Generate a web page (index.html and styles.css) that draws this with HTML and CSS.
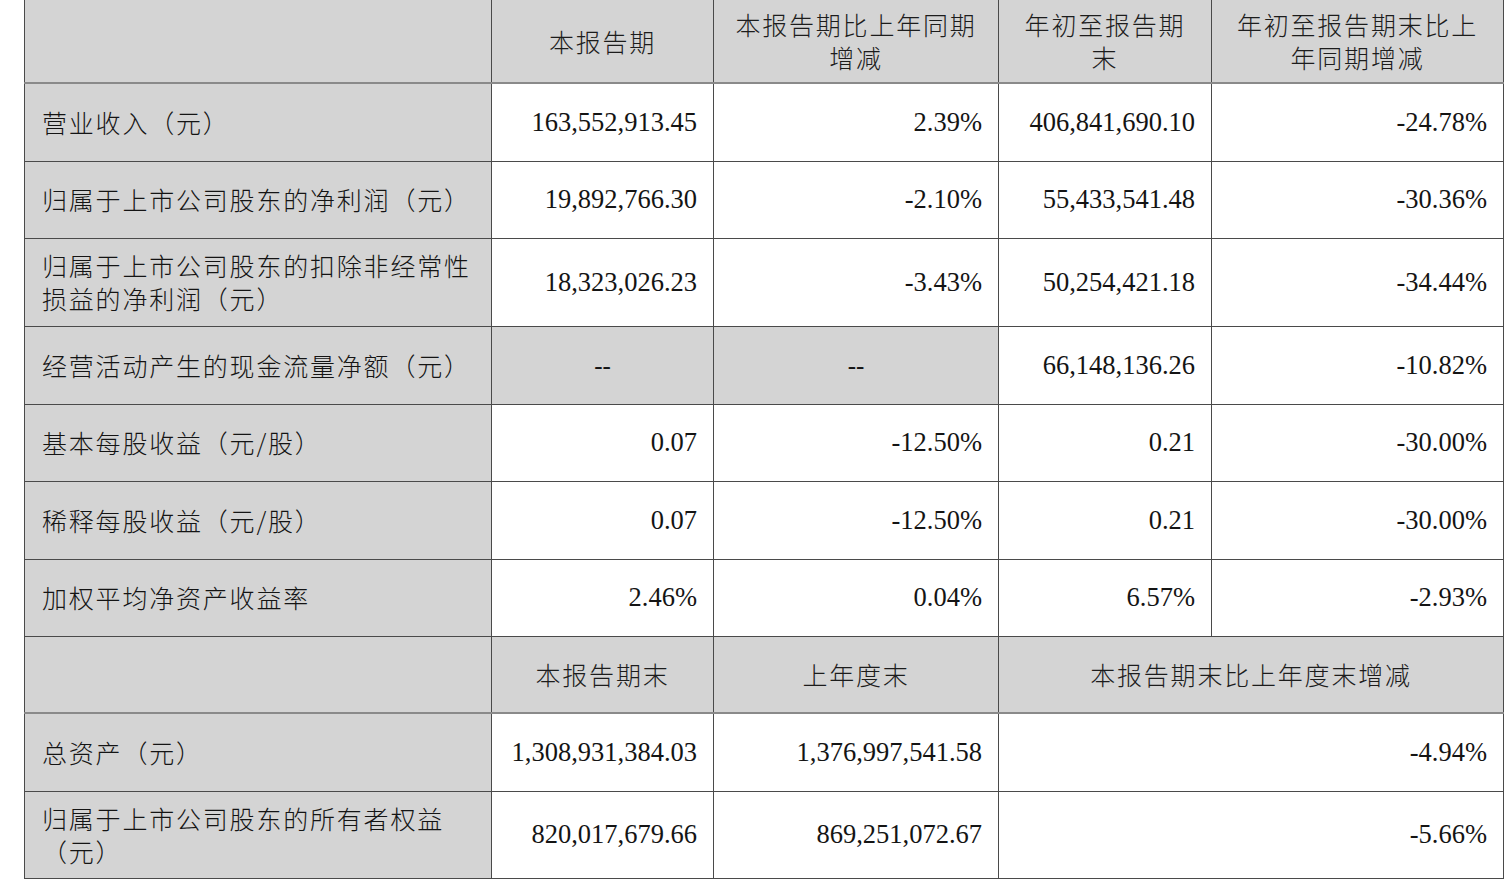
FILE: index.html
```html
<!DOCTYPE html>
<html lang="zh-CN">
<head>
<meta charset="utf-8">
<title>主要会计数据</title>
<link rel="stylesheet" href="styles.css">
</head>
<body>
<table class="fin">
  <colgroup>
    <col class="c1"><col class="c2"><col class="c3"><col class="c4"><col class="c5">
  </colgroup>
  <tbody>
    <tr class="h83 head">
      <td class="lab"></td>
      <td class="hd">本报告期</td>
      <td class="hd mid">本报告期比上年同期<br>增减</td>
      <td class="hd">年初至报告期<br>末</td>
      <td class="hd">年初至报告期末比上<br>年同期增减</td>
    </tr>
    <tr class="h78">
      <td class="lab">营业收入（元）</td>
      <td class="num">163,552,913.45</td>
      <td class="num mid">2.39%</td>
      <td class="num">406,841,690.10</td>
      <td class="num">-24.78%</td>
    </tr>
    <tr class="h77">
      <td class="lab">归属于上市公司股东的净利润（元）</td>
      <td class="num">19,892,766.30</td>
      <td class="num mid">-2.10%</td>
      <td class="num">55,433,541.48</td>
      <td class="num">-30.36%</td>
    </tr>
    <tr class="h88">
      <td class="lab">归属于上市公司股东的扣除非经常性<br>损益的净利润（元）</td>
      <td class="num">18,323,026.23</td>
      <td class="num mid">-3.43%</td>
      <td class="num">50,254,421.18</td>
      <td class="num">-34.44%</td>
    </tr>
    <tr class="h78">
      <td class="lab">经营活动产生的现金流量净额（元）</td>
      <td class="ctr grey">--</td>
      <td class="ctr grey mid">--</td>
      <td class="num">66,148,136.26</td>
      <td class="num">-10.82%</td>
    </tr>
    <tr class="h77">
      <td class="lab">基本每股收益（元/股）</td>
      <td class="num">0.07</td>
      <td class="num mid">-12.50%</td>
      <td class="num">0.21</td>
      <td class="num">-30.00%</td>
    </tr>
    <tr class="h78">
      <td class="lab">稀释每股收益（元/股）</td>
      <td class="num">0.07</td>
      <td class="num mid">-12.50%</td>
      <td class="num">0.21</td>
      <td class="num">-30.00%</td>
    </tr>
    <tr class="h77">
      <td class="lab">加权平均净资产收益率</td>
      <td class="num">2.46%</td>
      <td class="num mid">0.04%</td>
      <td class="num">6.57%</td>
      <td class="num">-2.93%</td>
    </tr>
    <tr class="h77 head">
      <td class="lab"></td>
      <td class="hd">本报告期末</td>
      <td class="hd mid">上年度末</td>
      <td class="hd" colspan="2">本报告期末比上年度末增减</td>
    </tr>
    <tr class="h78">
      <td class="lab">总资产（元）</td>
      <td class="num">1,308,931,384.03</td>
      <td class="num mid">1,376,997,541.58</td>
      <td class="num" colspan="2">-4.94%</td>
    </tr>
    <tr class="h87">
      <td class="lab">归属于上市公司股东的所有者权益<br>（元）</td>
      <td class="num">820,017,679.66</td>
      <td class="num mid">869,251,072.67</td>
      <td class="num" colspan="2">-5.66%</td>
    </tr>
  </tbody>
</table>
</body>
</html>
```

FILE: styles.css
```css
html, body {
  margin: 0;
  padding: 0;
  background: #ffffff;
}

body {
  font-family: "Liberation Serif", "Noto Sans CJK SC", serif;
  font-size: 25px;
  color: #141414;
}

.fin {
  margin: 0 0 0 24px;
  width: 1479px;
  table-layout: fixed;
  border-collapse: collapse;
}

.c1 { width: 467px; }
.c2 { width: 222px; }
.c3 { width: 285px; }
.c4 { width: 213px; }
.c5 { width: 292px; }

.fin td {
  border: 1px solid #4a4a4a;
  padding: 0 16px;
  line-height: 33px;
  vertical-align: middle;
  white-space: nowrap;
  overflow: hidden;
}

.fin tr:first-child td {
  border-top: none;
}

.h77 { height: 77px; }
.h78 { height: 78px; }
.h83 { height: 83px; }
.h87 { height: 87px; }
.h88 { height: 88px; }

.lab {
  background: #d4d4d4;
  text-align: left;
  padding-left: 17px !important;
  font-family: "Noto Sans CJK SC", "Liberation Serif", sans-serif;
  font-weight: 300;
  letter-spacing: 1.8px;
}

.head td {
  background: #d4d4d4;
  border-bottom: 2px solid #8a8a8a;
}

.hd {
  text-align: center;
  font-family: "Noto Sans CJK SC", "Liberation Serif", sans-serif;
  font-weight: 300;
  letter-spacing: 1.8px;
  color: #1c1c1c;
  line-height: 32px;
}

.hd > br { line-height: 32px; }

.num {
  text-align: right;
  background: #ffffff;
  font-size: 26.5px;
}

.ctr {
  text-align: center;
}

.grey {
  background: #d4d4d4;
}

.mid {
  border-left-color: #9a9a9a !important;
}
```
